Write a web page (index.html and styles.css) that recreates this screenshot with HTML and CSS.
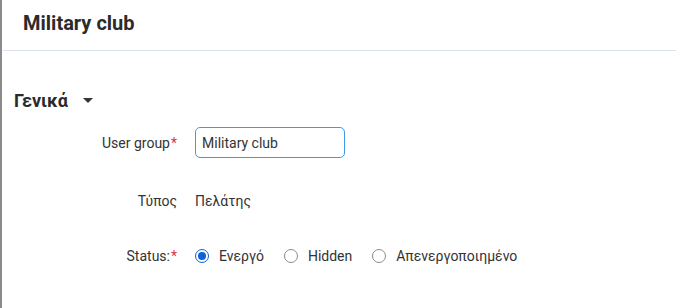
FILE: index.html
```html
<!DOCTYPE html>
<html lang="el">
<head>
    <meta charset="UTF-8">
    <title>Military club</title>
    <link rel="stylesheet" href="styles.css">
</head>
<body>
    <div class="panel">
        <div class="panel-header">
            <h1 class="panel-title">Military club</h1>
        </div>
        <div class="panel-body">
            <div class="section-title">
                <span>Γενικά</span>
                <span class="caret"></span>
            </div>
            <div class="form-row">
                <label class="form-label">User group<span class="req">*</span></label>
                <div class="form-field">
                    <input class="text-input" type="text" value="Military club">
                </div>
            </div>
            <div class="form-row row-type">
                <label class="form-label">Τύπος</label>
                <div class="form-field">Πελάτης</div>
            </div>
            <div class="form-row row-status">
                <label class="form-label">Status:<span class="req">*</span></label>
                <div class="form-field radios">
                    <label class="radio"><span class="radio-dot checked"></span>Ενεργό</label>
                    <label class="radio"><span class="radio-dot"></span>Hidden</label>
                    <label class="radio"><span class="radio-dot"></span>Απενεργοποιημένο</label>
                </div>
            </div>
        </div>
    </div>
</body>
</html>
```
FILE: styles.css
```css
body {
    margin: 0;
    background-color: white;
    font-family: Roboto, "Liberation Sans", Arial, sans-serif;
    font-size: 14px;
    color: #333;
}
.panel {
    border-left: 2px solid #8a8a8a;
    height: 308px;
    box-sizing: border-box;
}
.panel-header {
    height: 51px;
    border-bottom: 1px solid #dbe2ee;
    margin: 0 1px 0 1px;
    box-sizing: border-box;
    padding-left: 20px;
    display: flex;
    align-items: center;
}
.panel-title {
    margin: 0;
    font-size: 20px;
    font-weight: bold;
    color: #2b2b2b;
    position: relative;
    top: -2px;
}
.panel-body {
    padding-top: 38px;
}
.section-title {
    display: flex;
    align-items: center;
    padding-left: 12px;
    font-size: 18px;
    font-weight: bold;
    color: #2b2b2b;
    height: 22px;
}
.caret {
    width: 0;
    height: 0;
    margin-left: 15px;
    border-left: 5px solid transparent;
    border-right: 5px solid transparent;
    border-top: 5px solid #333;
}
.form-row {
    display: flex;
    align-items: center;
    margin-top: 16px;
}
.form-label {
    width: 175px;
    text-align: right;
    box-sizing: border-box;
    color: #333;
}
.req {
    color: #e0304a;
    margin-left: 1px;
}
.form-field {
    margin-left: 18px;
}
.text-input {
    width: 150px;
    height: 31px;
    box-sizing: border-box;
    border: 1px solid #3d9bec;
    border-radius: 5px;
    padding: 0 0 0 6px;
    font-family: inherit;
    font-size: 14px;
    color: #333;
    outline: none;
}
.row-type {
    margin-top: 35px;
}
.row-status {
    margin-top: 39px;
}
.radios {
    display: flex;
    align-items: center;
}
.radio {
    display: flex;
    align-items: center;
    margin-right: 20px;
}
.radio-dot {
    width: 12px;
    height: 12px;
    border: 1px solid #8a8a8a;
    border-radius: 50%;
    margin-right: 10px;
    position: relative;
}
.radio-dot.checked {
    border-color: #0b63d6;
}
.radio-dot.checked::after {
    content: "";
    position: absolute;
    left: 2px;
    top: 2px;
    width: 8px;
    height: 8px;
    border-radius: 50%;
    background-color: #0b63d6;
}
```
